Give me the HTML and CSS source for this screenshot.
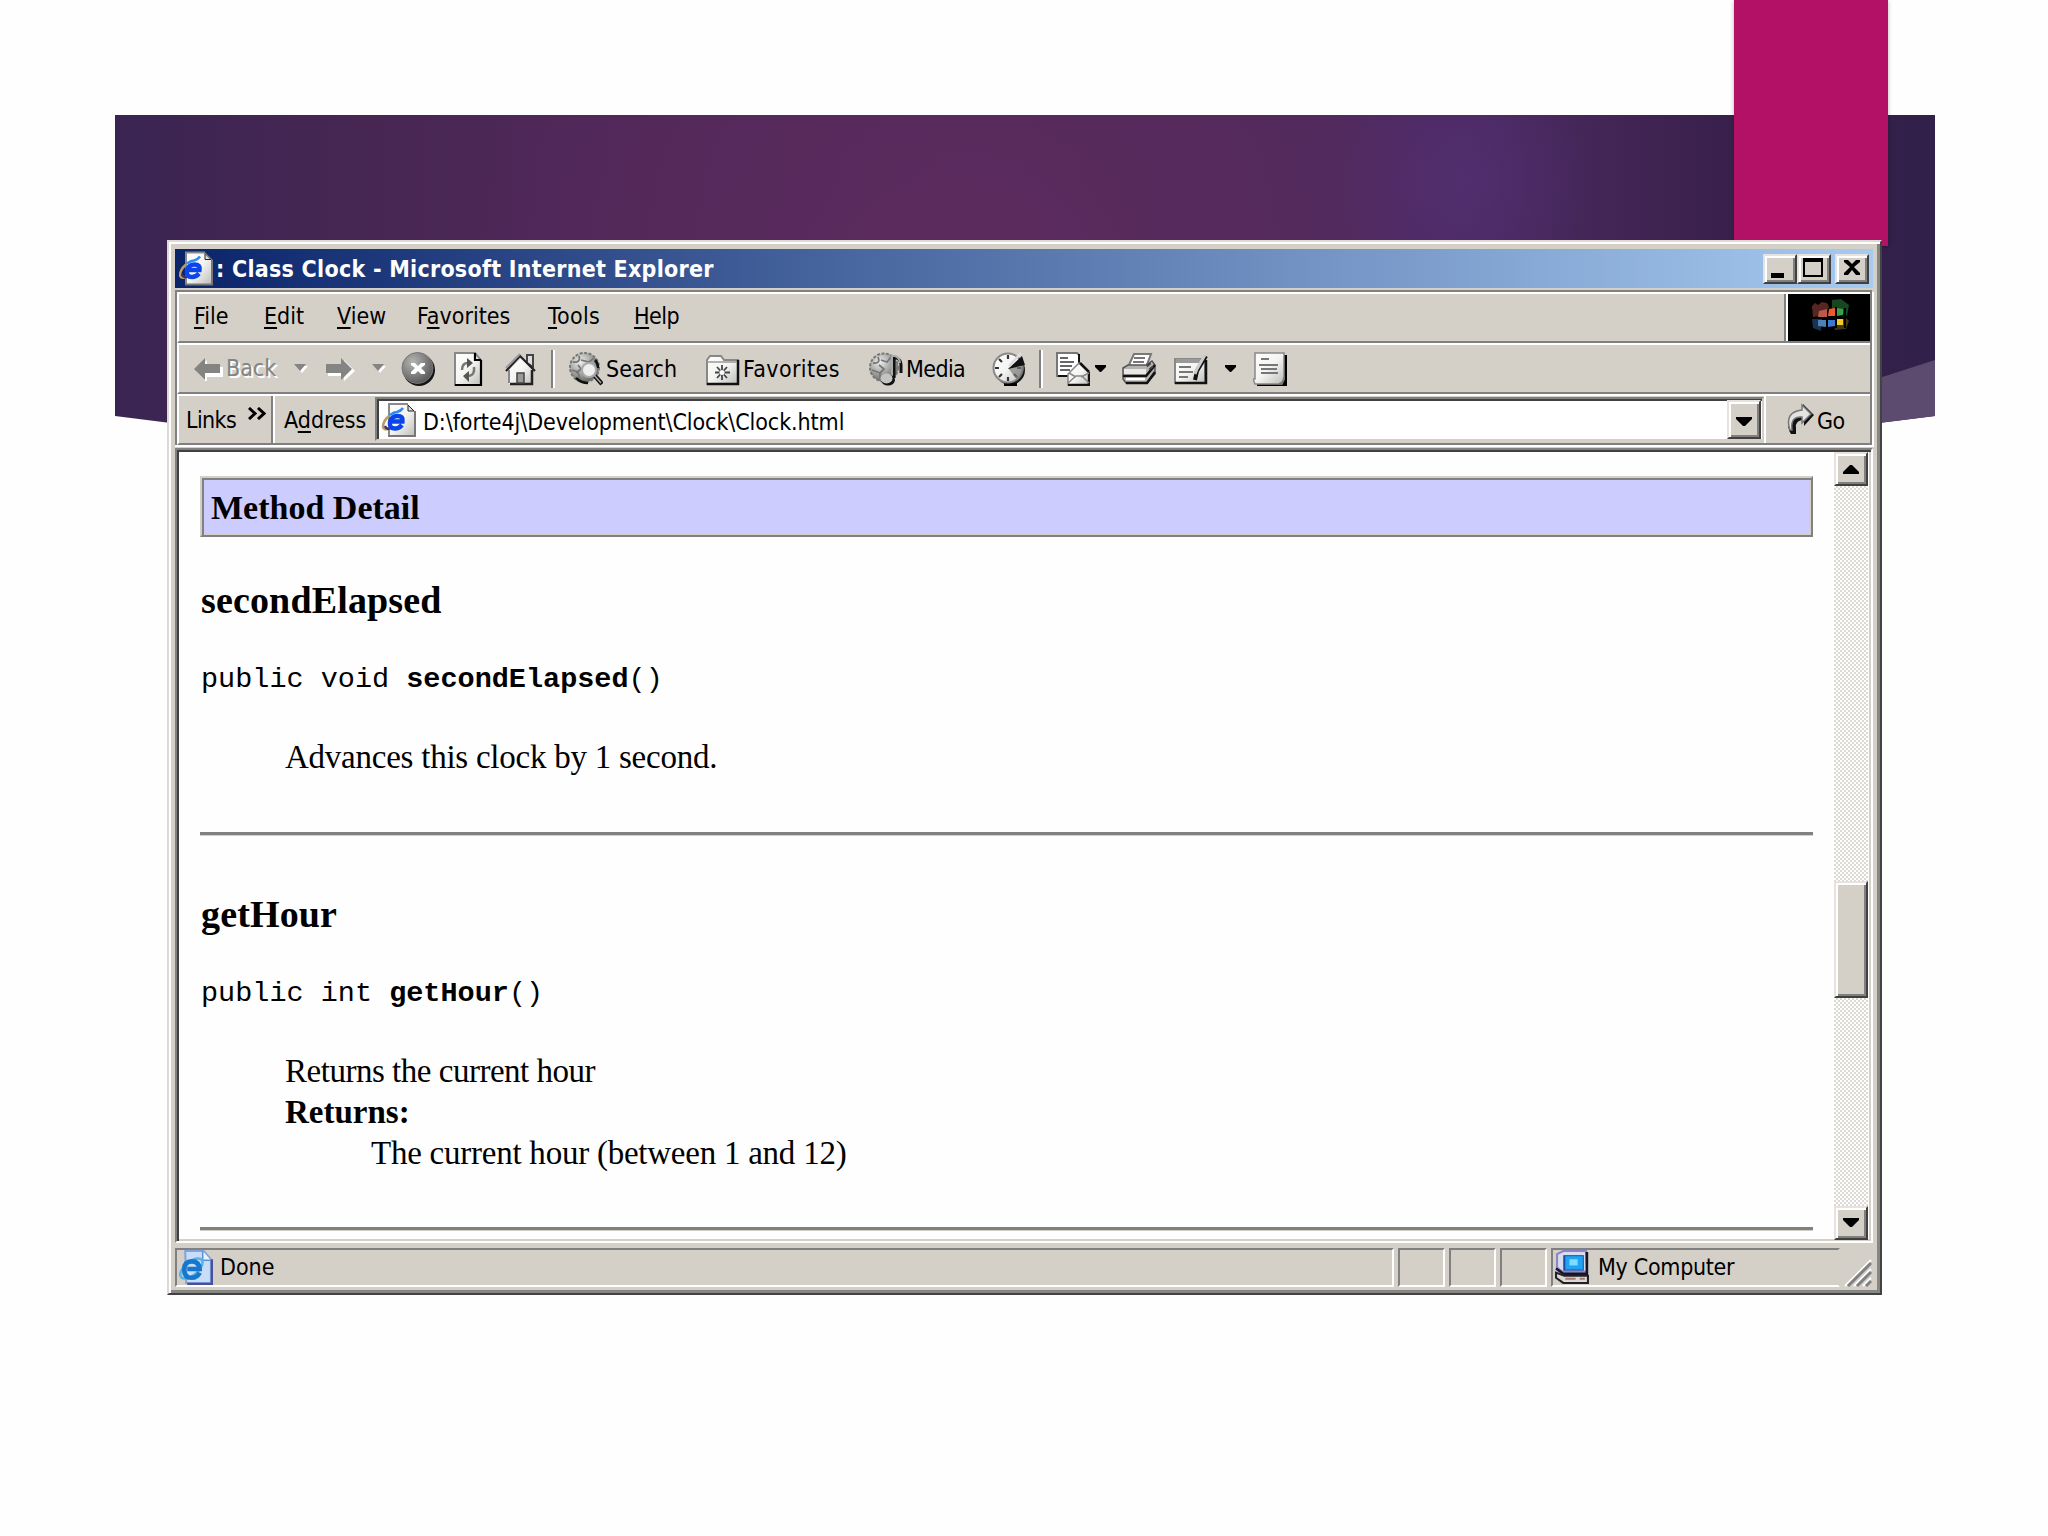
FILE: index.html
```html
<!DOCTYPE html>
<html lang="en">
<head>
<meta charset="utf-8">
<title>: Class Clock - Microsoft Internet Explorer</title>
<link rel="stylesheet" href="styles.css">
</head>
<body>
<svg class="defs" width="0" height="0" aria-hidden="true">
  <defs>
    <linearGradient id="paper" x1="0" y1="0" x2="1" y2="1"><stop offset="0" stop-color="#fff"/><stop offset=".5" stop-color="#f4f4f2"/><stop offset="1" stop-color="#bcbcb8"/></linearGradient>
    <radialGradient id="ball" cx=".35" cy=".3" r=".8"><stop offset="0" stop-color="#eee"/><stop offset=".4" stop-color="#b4b4b2"/><stop offset="1" stop-color="#5c5c5c"/></radialGradient>
    <radialGradient id="stopball" cx=".35" cy=".3" r=".8"><stop offset="0" stop-color="#b4b4b2"/><stop offset=".5" stop-color="#848484"/><stop offset="1" stop-color="#505050"/></radialGradient>
    <symbol id="ie-page" viewBox="0 0 34 34">
      <path d="M7 1h19l7 7v25H7z" fill="url(#paper)"/><path d="M7 33V1h19" fill="none" stroke="#8a8a88" stroke-width="2"/><path d="M6 33h27V8" fill="none" stroke="#777" stroke-width="2"/><path d="M26 2l6 6h-6z" fill="#ddd" stroke="#222"/>
      <path d="M7 13Q1 18 1 24q1 3 5 2" fill="none" stroke="#b99b66" stroke-width="2.500"/>
      <path d="M3 23q2 5 7 1" fill="none" stroke="#43306a" stroke-width="2.500"/>
      <path d="M20 22q-3 3.500-7 3.500-6 0-5-6.500 1.500-6 7.500-6 6 0 5 5.500H10" fill="none" stroke="#0b45e8" stroke-width="4.500"/>
      <path d="M8 12q4-3 7-3 4-1 6-4" fill="none" stroke="#2a8cf4" stroke-width="2.500"/>
    </symbol>
  </defs>
</svg>

<div class="slide">
  <svg class="backdrop" viewBox="0 0 2048 1536" aria-hidden="true">
    <defs>
      <linearGradient id="band" gradientUnits="userSpaceOnUse" x1="115" y1="0" x2="1935" y2="0">
        <stop offset="0" stop-color="#3a2552"/><stop offset=".12" stop-color="#462652"/><stop offset=".25" stop-color="#4e2858"/><stop offset=".45" stop-color="#53295a"/><stop offset=".63" stop-color="#50295a"/><stop offset=".74" stop-color="#4d2b63"/><stop offset=".82" stop-color="#432556"/><stop offset=".88" stop-color="#3a214d"/><stop offset="1" stop-color="#31204a"/>
      </linearGradient>
      <radialGradient id="glow" gradientUnits="userSpaceOnUse" cx="960" cy="300" r="520"><stop offset="0" stop-color="#622c60" stop-opacity=".65"/><stop offset="1" stop-color="#622c60" stop-opacity="0"/></radialGradient>
      <radialGradient id="violet" gradientUnits="userSpaceOnUse" cx="1465" cy="180" r="130"><stop offset="0" stop-color="#55307a" stop-opacity=".5"/><stop offset="1" stop-color="#55307a" stop-opacity="0"/></radialGradient>
    </defs>
    <path d="M115 115H1935V416L1524 468H526L115 416Z" fill="url(#band)"/>
    <path d="M115 115H1935V416L1524 468H526L115 416Z" fill="url(#glow)"/>
    <path d="M1330 115H1600V300H1330Z" fill="url(#violet)"/>
    <path d="M1870 381L1935 360V416L1870 424Z" fill="#5c4b6f"/>
  </svg>
  <div class="ribbon"></div>

  <main class="window">
    <header class="titlebar">
      <svg class="app-icon"><use href="#ie-page"/></svg>
      <h1 class="caption">: Class Clock - Microsoft Internet Explorer</h1>
      <div class="caption-buttons">
        <button class="btn cap-btn" aria-label="Minimize"><svg viewBox="0 0 34 30"><path d="M8 19h13v5H8z"/></svg></button>
        <button class="btn cap-btn" aria-label="Maximize"><svg viewBox="0 0 34 30"><path d="M6 4h20v19H6zM8 8v13h16V8z" fill-rule="evenodd"/></svg></button>
        <button class="btn cap-btn close" aria-label="Close"><svg viewBox="0 0 34 30"><path d="M9 6h4l4 4 4-4h4v2l-6 5 6 6v2h-4l-4-5-4 5H9v-2l6-6-6-5z"/></svg></button>
      </div>
    </header>

    <section class="rebar">
      <div class="band menu-band">
        <nav class="menu">
          <span class="m-file"><u>F</u>ile</span><span class="m-edit"><u>E</u>dit</span><span class="m-view"><u>V</u>iew</span><span class="m-fav">F<u>a</u>vorites</span><span class="m-tools"><u>T</u>ools</span><span class="m-help"><u>H</u>elp</span>
        </nav>
        <div class="throbber">
          <svg viewBox="0 0 82 47">
            <g opacity=".55"><path d="M24 12l3-3 3 2 4-3 5 1 2 4-4 8-12 2z" fill="#a0463c"/><path d="M24 25h10l-1 12-8-3z" fill="#2e5b96"/><path d="M44 6l9-1 8 6-2 11-6-4-9-2z" fill="#28823c"/><path d="M56 22l5 5-3 8-12 1z" fill="#746b24"/></g>
            <path d="M31 17l8-2v8h-9z" fill="#b95a4c"/><path d="M41 15l6-1v8h-7z" fill="#ee5a2c"/><path d="M49 14l6 1v6l-6 1z" fill="#36a14b"/><path d="M30 26h8v7l-8-1z" fill="#4d82b9"/><path d="M40 26h7v6l-7 1z" fill="#3979d0"/><path d="M49 24h6v7h-6z" fill="#f6cc22"/>
            <path d="M48 13v21M39 24h17M57 14v20" stroke="#000" stroke-width="2"/>
          </svg>
        </div>
      </div>

      <div class="band tool-band">
        <span class="tool back">
          <svg viewBox="0 0 30 24"><path d="M2 14L13 3v7h16v10H13v6z" fill="#fff"/><path d="M0 12L11 1v6h15v9H11v7z" fill="#848482"/></svg><span class="t-back">Back</span>
        </span>
        <svg class="caret c1" viewBox="0 0 14 9"><path d="M2 2h12L8 9z" fill="#fff"/><path d="M0 0h12L6 7z" fill="#848482"/></svg>
        <svg class="fwd" viewBox="0 0 30 24"><path d="M2 9h16V3l11 11-11 10v-5H2z" fill="#fff"/><path d="M0 7h15V1l11 11-11 11v-7H0z" fill="#848482"/></svg>
        <svg class="caret c2" viewBox="0 0 14 9"><path d="M2 2h12L8 9z" fill="#fff"/><path d="M0 0h12L6 7z" fill="#848482"/></svg>
        <svg class="ico i-stop" viewBox="0 0 34 34"><circle cx="18" cy="18" r="16" fill="#161616"/><circle cx="16.500" cy="16" r="15.500" fill="url(#stopball)" stroke="#777"/><path d="M10 11h4l3 3 3-3h4v2l-4 3 4 4v2h-4l-3-3-3 3h-4v-2l4-4-4-3z" fill="#fff"/></svg>
        <svg class="ico i-refresh" viewBox="0 0 34 34"><path d="M3 1h20l6 7v25H3z" fill="url(#paper)" stroke="#888" stroke-width="2"/><path d="M29 8v25H3M23 1v7h6" fill="none" stroke="#000" stroke-width="2.200"/><path d="M10 18q0-7 6-7M22 15q1 8-5 9" fill="none" stroke="#777" stroke-width="2.500"/><path d="M15 6v10l6-5zM17 19v11l-6-6z" fill="#555"/></svg>
        <svg class="ico i-home" viewBox="0 0 34 34"><path d="M24 3h6v12l-6-4z" fill="#ddd" stroke="#444" stroke-width="2"/><path d="M6 18L18 6l12 12v14H6z" fill="url(#paper)"/><path d="M6 18v13" fill="none" stroke="#888" stroke-width="2"/><path d="M7 32h22V18" fill="none" stroke="#222" stroke-width="2.500"/><path d="M3 19L17 4l15 15" fill="none" stroke="#222" stroke-width="2.200"/><path d="M3 16L17 2" stroke="#999" stroke-width="2"/><path d="M14 31V21h7v10z" fill="#9a9a98" stroke="#444" stroke-width="1.500"/></svg>
        <i class="divider d1"></i>
        <span class="tool search"><svg class="ico" viewBox="0 0 34 34"><circle cx="15.500" cy="15.500" r="14.500" fill="url(#ball)" stroke="#777" stroke-width="2" stroke-dasharray="3 1.500"/><path d="M4 10q8 1 6-6M12 8l8 2 5-4M3 18l6 2 2 8M9 13l3 4-5 4" fill="none" stroke="#777" stroke-width="1.800"/><path d="M7 26q5 5 12 5M26 8q3 3 3 8" fill="none" stroke="#111" stroke-width="2.500"/><circle cx="20" cy="18" r="7" fill="#eee" stroke="#aaa" stroke-width="2"/><path d="M26 24l7 8" stroke="#111" stroke-width="4.500"/><path d="M25 23l7 8" stroke="#aaa" stroke-width="1.500"/></svg><span class="t-search">Search</span></span>
        <span class="tool favs"><svg class="ico" viewBox="0 0 34 34"><path d="M1 32V8l3-4h11l3 4h14v24z" fill="url(#paper)" stroke="#888" stroke-width="2"/><path d="M1 32h31V8" fill="none" stroke="#111" stroke-width="2.500"/><path d="M1 10h30" stroke="#999" stroke-width="1.500"/><path d="M16 13v15M9 20.500h15M11 15l10 11M21 15L11 26" stroke="#444" stroke-width="1.800"/><circle cx="16" cy="20.500" r="2.500" fill="#fff"/></svg><span class="t-favs">Favorites</span></span>
        <span class="tool media"><svg class="ico" viewBox="0 0 34 34"><circle cx="15" cy="15.500" r="14" fill="url(#ball)" stroke="#777" stroke-width="2" stroke-dasharray="3 1.500"/><path d="M4 11q8 1 5-6M12 8l6 2 4-5M3 18l8 3v8M10 13l5 4-4 4" fill="none" stroke="#777" stroke-width="1.800"/><path d="M25 26V6h3q4 2 4 7v8" fill="none" stroke="#111" stroke-width="3"/><path d="M23 25V4h3q5 2 5 7" fill="none" stroke="#aaa" stroke-width="2"/><ellipse cx="19" cy="28" rx="7" ry="5.500" fill="#111"/><ellipse cx="17.500" cy="26.500" rx="6" ry="5" fill="#c4c4c2"/></svg><span class="t-media">Media</span></span>
        <svg class="ico i-hist" viewBox="0 0 34 34"><circle cx="18" cy="18" r="15" fill="#151515"/><path d="M12 31h13v3H12z"/><circle cx="16" cy="16" r="14.500" fill="url(#paper)" stroke="#888" stroke-width="2"/><path d="M16 3v4M16 25v4M3 16h4M25 16h4M7 7l3 3M7 25l3-3M25 25l-3-3" stroke="#333" stroke-width="2.200"/><path d="M16 16l16-3q1 9-7 15z" fill="#777" opacity=".65"/><path d="M16 17L30 4l3 9z" fill="#111"/><path d="M17 14L29 1" stroke="#ddd" stroke-width="2.500"/></svg>
        <i class="divider d2"></i>
        <svg class="ico i-mail" viewBox="0 0 34 34"><path d="M1 1h20l2 2v21H1z" fill="#fff" stroke="#777" stroke-width="2"/><path d="M23 2v22H2" fill="none" stroke="#111" stroke-width="2"/><path d="M4 6h8M4 10h14M4 14h12M4 18h10" stroke="#666" stroke-width="2"/><path d="M12 22l11-11 11 10v13H12z" fill="url(#paper)" stroke="#888" stroke-width="1.500"/><path d="M12 33h21V20M24 11l9 9" fill="none" stroke="#111" stroke-width="2.500"/><path d="M12 31l8-7h6l7 7M13 21l7 4M33 21l-8 4" fill="none" stroke="#888" stroke-width="1.500"/></svg>
        <svg class="caret c3" viewBox="0 0 12 7"><path d="M0 0h11v2L6 7H5L0 2z"/></svg>
        <svg class="ico i-print" viewBox="0 0 34 34"><path d="M12 2h17l-5 13H6z" fill="#fff" stroke="#777" stroke-width="2"/><path d="M12 6h11M11 10h11" stroke="#777" stroke-width="2"/><path d="M1 16l5-3h18l6-4 3 4v9l-8 9H4l-3-4z" fill="#b4b3b0" stroke="#555" stroke-width="1.500"/><path d="M2 17h22v5H2z" fill="#e8e8e4"/><path d="M1 24h23l9-11M4 31h21l8-11" fill="none" stroke="#111" stroke-width="2.500"/><path d="M4 27h19" stroke="#fff" stroke-width="2.500"/><path d="M26 12l5 6" stroke="#444" stroke-dasharray="2 2" stroke-width="5"/></svg>
        <svg class="ico i-edit" viewBox="0 0 34 34"><path d="M1 7h30v24H1z" fill="url(#paper)" stroke="#888" stroke-width="2"/><path d="M1 31h31V8" fill="none" stroke="#111" stroke-width="2.500"/><path d="M2 9h24" stroke="#999" stroke-width="4"/><path d="M5 15h12M5 20h14M5 25h9" stroke="#777" stroke-width="2"/><path d="M21 28l2-9 9-15" fill="none" stroke="#111" stroke-width="4"/><path d="M21 22l2-5 8-14" fill="none" stroke="#ccc" stroke-width="3"/></svg>
        <svg class="caret c4" viewBox="0 0 12 7"><path d="M0 0h11v2L6 7H5L0 2z"/></svg>
        <svg class="ico i-disc" viewBox="0 0 34 34"><path d="M5 3h29v31H4z"/><path d="M2 1h29v26l-2 5H2l-2-5h2z" fill="url(#paper)" stroke="#888" stroke-width="1.500"/><path d="M8 7h8M6 13h19M8 17h16M8 21h17" stroke="#777" stroke-width="2"/><path d="M26 32q5-1 5-7" fill="none" stroke="#777" stroke-width="2"/></svg>
      </div>

      <div class="band addr-band">
        <div class="links"><span class="t-links">Links</span><svg class="chev" viewBox="0 0 18 13"><path d="M1 1l6 5.500L1 12M10 1l6 5.500-6 5.500" fill="none" stroke="#000" stroke-width="3"/></svg></div>
        <div class="address">
          <span class="t-addr">A<u>d</u>dress</span>
          <div class="field">
            <svg class="url-icon"><use href="#ie-page"/></svg>
            <span class="url">D:\forte4j\Development\Clock\Clock.html</span>
            <button class="btn drop" aria-label="Open list"><svg viewBox="0 0 34 38"><path d="M9 16h16v2l-7 7h-2l-7-7z"/></svg></button>
          </div>
        </div>
        <div class="go"><svg viewBox="0 0 28 32"><path d="M10 31H5Q1 26 3 17 6 10 17 9V1L28 12 18 23v-6q-9 0-8 8z" fill="#111"/><path d="M4 27Q-2 9 16 7V2l9 9-9 9v-6Q4 13 6 27z" fill="#e4e4e2" stroke="#777" stroke-width="1.500"/></svg><span class="t-go">Go</span></div>
      </div>
    </section>

    <section class="viewport">
      <article class="doc">
        <h2 class="section-title">Method Detail</h2>
        <h3 class="h-second">secondElapsed</h3>
        <pre class="sig">public void <b>secondElapsed</b>()</pre>
        <p class="desc d-adv">Advances this clock by 1 second.</p>
        <hr>
        <h3 class="h-hour">getHour</h3>
        <pre class="sig">public int <b>getHour</b>()</pre>
        <dl>
          <dd class="desc d-ret">Returns the current hour</dd>
          <dt>Returns:</dt>
          <dd class="result">The current hour (between 1 and 12)</dd>
        </dl>
        <hr>
      </article>
      <aside class="scrollbar">
        <button class="btn sb-btn" aria-label="Scroll up"><svg viewBox="0 0 34 34"><path d="M9 22v-2l7-7h2l7 7v2z"/></svg></button>
        <div class="track"><div class="btn thumb"></div></div>
        <button class="btn sb-btn" aria-label="Scroll down"><svg viewBox="0 0 34 34"><path d="M9 12h16v2l-7 7h-2l-7-7z"/></svg></button>
      </aside>
    </section>

    <footer class="status">
      <div class="pane main-pane">
        <svg class="st-icon" viewBox="0 0 34 34"><path d="M7 1h18l7 8v23H8z" fill="#c9dcf8" stroke="#7fa6dc" stroke-width="2"/><path d="M9 33h24V9" fill="none" stroke="#4b4f9c" stroke-width="2.500"/><path d="M24 1v9h8" fill="#e9f4ff" stroke="#5d93d4" stroke-width="1.500"/><ellipse cx="13" cy="18" rx="13" ry="6.500" fill="none" stroke="#55b4ea" stroke-width="2.500" transform="rotate(-40 13 18)"/><path d="M21 22q-2 5-8 5-7 0-7-8t7.500-8q7 0 7.500 7.500H9" fill="none" stroke="#1677cc" stroke-width="4.500"/></svg>
        <span class="t-done">Done</span>
      </div>
      <div class="pane small"></div><div class="pane small"></div><div class="pane small"></div>
      <div class="pane zone">
        <svg class="st-icon" viewBox="0 0 34 34"><path d="M2 4l6-3h22l1 20H7l-5-4z" fill="#d9dcec" stroke="#8a84c8" stroke-width="2"/><path d="M31 2v21H8M1 18l7 5" fill="none" stroke="#14142c" stroke-width="2.500"/><path d="M8 5h20v15H8z" fill="#1d4d9e"/><path d="M10 6h17v13H10z" fill="#1fa3f5"/><path d="M14 9h8v6h-8z" fill="#7fdcff"/><path d="M1 22l8 3h23v7H8l-7-5z" fill="#dcd8d4" stroke="#222" stroke-width="2"/><path d="M10 28h10M24 28h5" stroke="#a07c74" stroke-width="2"/></svg>
        <span class="t-zone">My Computer</span>
      </div>
      <svg class="grip" viewBox="0 0 28 28"><path d="M1 27L27 1M10 27L27 10M19 27l8-8" stroke="#fff" stroke-width="2"/><path d="M4 27L27 4M13 27l14-14M22 27l5-5" stroke="#808080" stroke-width="3"/></svg>
    </footer>
  </main>
</div>
</body>
</html>
```

FILE: styles.css
```css
* { box-sizing: border-box; }
body { margin: 0; background: #fefefe; }
h1, h2, h3, p, pre, dl, dd, dt { margin: 0; }
svg { display: block; flex: none; }
.defs { position: absolute; }

.slide { position: relative; width: 2048px; height: 1536px; overflow: hidden; }
.backdrop { position: absolute; inset: 0; width: 2048px; height: 1536px; }
.ribbon { position: absolute; left: 1734px; top: 0; width: 154px; height: 246px; background: #b31166; box-shadow: 0 1px 4px rgba(0,0,0,.3); }

.window {
  position: absolute; left: 167px; top: 240px; width: 1715px; height: 1055px;
  display: flex; flex-direction: column;
  padding: 7px 7px 6px 6px;
  background: #d4d0c8;
  border: 2px solid; border-color: #ddd9d4 #424242 #424242 #ddd9d4;
  box-shadow: inset 2px 2px #fff, inset -3px -3px #868682;
  font: 23px/27px "DejaVu Sans Condensed", "DejaVu Sans", sans-serif;
  font-stretch: condensed;
  color: #000; white-space: nowrap;
}
u { text-decoration-thickness: 2px; text-underline-offset: 3px; text-decoration-skip-ink: none; }

.btn {
  display: block; padding: 0; border: 2px solid; border-color: #e6e3de #404040 #404040 #e6e3de; border-radius: 0;
  background: #d4d0c8; box-shadow: inset 2px 2px #fff, inset -2px -2px #808080;
}
.btn svg { margin: -2px; }

.titlebar { display: flex; align-items: center; height: 39px; flex: none; padding: 0 4px 0 4px; background: linear-gradient(90deg, #0a246a, #a6caf0); }
.app-icon { width: 34px; height: 35px; }
.caption { margin: 1px 0 0 3px; flex: 1; color: #fff; font-size: 23px; line-height: 27px; font-weight: bold; letter-spacing: .26px; }
.caption-buttons { display: flex; align-self: flex-start; margin-top: 5px; }
.cap-btn { width: 34px; height: 30px; }
.cap-btn svg { width: 34px; height: 30px; }
.close { margin-left: 4px; }

.rebar { flex: none; width: 1697px; margin-top: 2px; border: 2px solid #808080; border-bottom: 0; box-shadow: 0 2px #fff, 2px 2px #fff; }
.band { display: flex; align-items: center; height: 51px; border: 2px solid; border-color: #fff transparent #808080 #fff; border-right: 0; }
.menu-band { align-items: stretch; }
.menu { display: flex; align-items: center; flex: 1; padding: 0 0 3px 15px; border-right: 2px solid #808080; }
.m-file { width: 70px; } .m-edit { width: 73px; } .m-view { width: 80px; } .m-fav { width: 131px; } .m-tools { width: 86px; letter-spacing: .3px; } .m-help { letter-spacing: -.5px; }
.throbber { width: 84px; border-left: 2px solid #fff; background: #000; }
.throbber svg { width: 82px; height: 47px; }

.tool { display: flex; align-items: center; flex: none; }
.ico { width: 34px; height: 34px; }
.back { width: 100px; margin-left: 15px; color: #848482; text-shadow: 2px 2px #fff; }
.back svg, .fwd { width: 30px; height: 24px; }
.t-back { margin-left: 2px; }
.caret { width: 14px; height: 9px; }
.c1 { margin-left: 0; } .fwd { margin-left: 18px; } .c2 { margin-left: 16px; }
.i-stop { margin-left: 15px; } .i-refresh { margin-left: 17px; } .i-home { margin-left: 17px; }
.divider { flex: none; width: 4px; height: 38px; border-left: 2px solid #808080; border-right: 2px solid #fff; }
.d1 { margin-left: 14px; }
.search { width: 137px; margin-left: 14px; } .favs { width: 163px; } .media { width: 123px; }
.t-search, .t-favs, .t-media { margin: 1px 0 0 3px; }
.t-favs { letter-spacing: .4px; }
.t-media { letter-spacing: -.6px; }
.d2 { margin-left: 13px; } .i-mail { margin-left: 13px; }
.c3, .c4 { width: 12px; height: 7px; }
.c3 { margin-left: 5px; } .i-print { margin-left: 15px; } .i-edit { margin-left: 18px; } .c4 { margin-left: 17px; } .i-disc { margin-left: 16px; }

.addr-band { align-items: stretch; }
.links { display: flex; width: 94px; padding: 11px 0 0 7px; border-right: 2px solid #808080; }
.t-links { width: 62px; letter-spacing: -.6px; }
.chev { width: 18px; height: 13px; }
.address { display: flex; flex: 1; border-left: 2px solid #fff; }
.t-addr { width: 100px; padding: 11px 0 0 9px; }
.field { display: flex; flex: 1; margin: 1px 0 2px; padding-left: 1px; background: #fff; border: 2px solid; border-color: #808080 #d4d0c8 #d4d0c8 #808080; box-shadow: inset 2px 2px #404040; }
.url-icon { width: 36px; height: 34px; margin: 4px 0 0 3px; }
.url { flex: 1; margin: 10px 0 0 6px; letter-spacing: -.08px; }
.drop { width: 34px; height: 39px; margin: 1px 1px 0 0; }
.drop svg { width: 34px; height: 38px; }
.go { display: flex; width: 106px; padding: 7px 0 0 20px; border-left: 2px solid #fff; }
.go svg { width: 28px; height: 32px; }
.t-go { margin: 5px 0 0 3px; letter-spacing: -.5px; }

.viewport { display: flex; flex: none; height: 795px; margin-top: 3px; background: #fefefe; border: 2px solid; border-color: #808080 #fff #fff #808080; padding: 2px 3px 1px 2px; box-shadow: inset 2px 2px #404040, inset -2px -2px #d4d0c8; }
.doc { flex: 1; padding: 24px 21px 0 21px; color: #000; font: 33px/40px "Liberation Serif", serif; }
.section-title { height: 61px; padding: 8px 0 0 9px; background: #ccf; border: 2px solid; border-color: #d4d0c8 #808080 #808080 #d4d0c8; box-shadow: inset 2px 2px #808080, inset -2px -2px #d4d0c8; font-size: 34px; line-height: 44px; }
.doc h3 { font-size: 38px; line-height: 44px; padding-left: 1px; letter-spacing: .15px; }
.h-second { margin-top: 41px; }
.h-hour { margin-top: 56px; }
.sig { margin: 41px 0 0 1px; font: 28.5px/34px "Liberation Mono", monospace; }
.desc { padding-left: 85px; }
.d-adv { margin-top: 40px; letter-spacing: -.24px; }
.d-ret { letter-spacing: -.48px; }
dl { margin-top: 40px; line-height: 41px; }
dt { padding-left: 85px; font-weight: bold; }
.result { padding-left: 171px; letter-spacing: -.24px; }
hr { height: 4px; margin: 55px 0 0; border: 0; border-top: 3px solid #808080; border-bottom: 1px solid #d4d0c8; }
dl + hr { margin-top: 53px; }

.scrollbar { display: flex; flex-direction: column; width: 34px; flex: none; }
.sb-btn { width: 34px; height: 34px; flex: none; }
.sb-btn svg { width: 34px; height: 34px; }
.track { flex: 1; padding-top: 395px; background: repeating-conic-gradient(#dcd8d4 0 25%, #fff 0 50%) 0 0 / 4px 4px; }
.thumb { width: 34px; height: 117px; }

.status { display: flex; gap: 4px; flex: none; height: 39px; margin-top: 5px; }
.pane { display: flex; align-items: center; border: 2px solid; border-color: #808080 #fff #fff #808080; }
.main-pane { width: 1219px; padding-left: 1px; }
.small { width: 47px; }
.zone { width: 289px; padding-left: 2px; border-right-color: transparent; }
.st-icon { width: 35px; height: 35px; }
.t-done { margin-left: 7px; }
.t-zone { margin-left: 8px; letter-spacing: -.3px; }
.grip { width: 28px; height: 28px; margin-top: 11px; }
```
